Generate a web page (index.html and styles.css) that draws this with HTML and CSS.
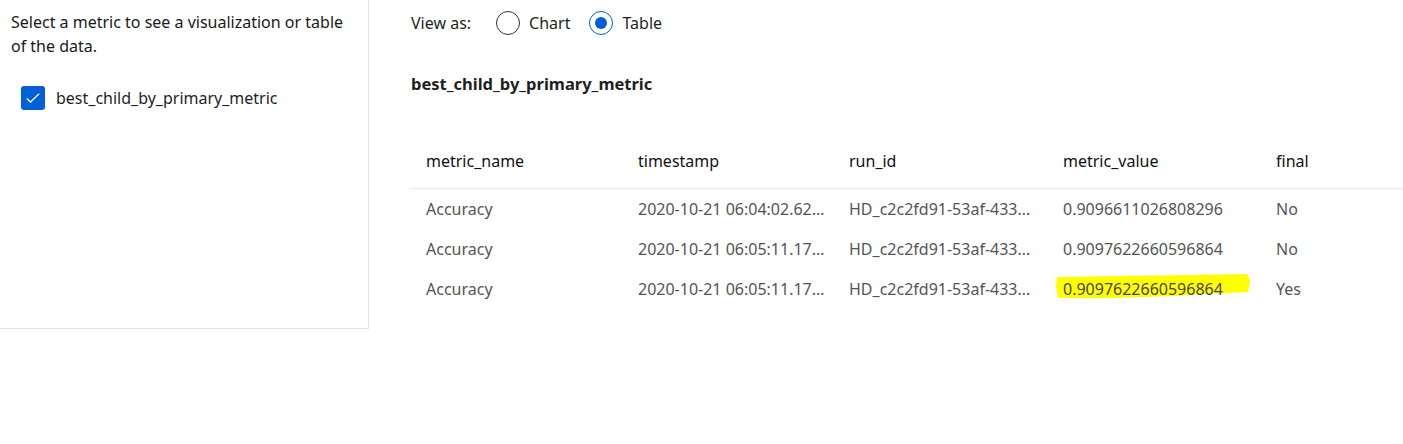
FILE: index.html
```html
<!DOCTYPE html>
<html lang="en">
<head>
<meta charset="utf-8">
<title>Metrics</title>
<link rel="stylesheet" href="styles.css">
</head>
<body>
<div class="page">
  <aside class="side">
    <p class="hint">Select a metric to see a visualization or table of the data.</p>
    <label class="check">
      <span class="box"><svg width="16" height="16" viewBox="0 0 16 16"><path d="M1.8 8.6 L5.6 12 L14.2 3.6" fill="none" stroke="#fff" stroke-width="1.3"/></svg></span>
      <span>best_child_by_primary_metric</span>
    </label>
  </aside>
  <main class="main">
    <div class="viewas">
      <span class="viewlabel">View as:</span>
      <span class="radio"><span class="ring"></span>Chart</span>
      <span class="radio on"><span class="ring"><span class="dot"></span></span>Table</span>
    </div>
    <h2 class="title">best_child_by_primary_metric</h2>
    <div class="table">
      <div class="row head">
        <div class="cell c1">metric_name</div>
        <div class="cell c2">timestamp</div>
        <div class="cell c3">run_id</div>
        <div class="cell c4">metric_value</div>
        <div class="cell c5">final</div>
      </div>
      <div class="row">
        <div class="cell c1">Accuracy</div>
        <div class="cell c2">2020-10-21 06:04:02.623456</div>
        <div class="cell c3">HD_c2c2fd91-53af-4335-9d6a</div>
        <div class="cell c4">0.9096611026808296</div>
        <div class="cell c5">No</div>
      </div>
      <div class="row">
        <div class="cell c1">Accuracy</div>
        <div class="cell c2">2020-10-21 06:05:11.173456</div>
        <div class="cell c3">HD_c2c2fd91-53af-4335-9d6a</div>
        <div class="cell c4">0.9097622660596864</div>
        <div class="cell c5">No</div>
      </div>
      <div class="row">
        <div class="cell c1">Accuracy</div>
        <div class="cell c2">2020-10-21 06:05:11.173456</div>
        <div class="cell c3">HD_c2c2fd91-53af-4335-9d6a</div>
        <div class="cell c4 hl"><svg class="marker" width="200" height="30" viewBox="0 0 200 30"><path d="M2 6 L60 5 L140 4 L192 3 L195 10 L193 21 L150 23 L120 25 L60 27 L3 27 L1 16 Z" fill="#ffff00"/></svg><span class="hltext">0.9097622660596864</span></div>
        <div class="cell c5">Yes</div>
      </div>
    </div>
  </main>
</div>
</body>
</html>
```

FILE: styles.css
```css
* { box-sizing: border-box; }
html, body { margin: 0; padding: 0; background: #fff; }
body { font-family: "Segoe UI", "Noto Sans", "Open Sans", sans-serif; font-size: 16px; color: #1f1f1f; }
.page { display: flex; align-items: flex-start; }
.side {
  width: 369px; height: 329px; flex: none;
  border-right: 1px solid #e4e4e4; border-bottom: 1px solid #e4e4e4;
  padding: 10px 11px;
}
.hint { margin: 0; line-height: 24px; font-size: 16px; color: #1a1a1a; }
.check { display: flex; align-items: center; gap: 11px; margin-top: 28px; padding-left: 10px; font-size: 16px; }
.box { width: 24px; height: 24px; border-radius: 3px; background: #0160d7; display: flex; align-items: center; justify-content: center; }
.main { flex: 1; padding: 10px 0 0 42px; }
.viewas { display: flex; align-items: center; height: 26px; font-size: 16px; }
.viewlabel { margin-right: 25px; }
.radio { display: flex; align-items: center; gap: 9px; margin-right: 19px; }
.ring { width: 24px; height: 24px; border-radius: 50%; border: 1px solid #333; display: flex; align-items: center; justify-content: center; }
.radio.on .ring { border-color: #0160d7; }
.dot { width: 12px; height: 12px; border-radius: 50%; background: #0160d7; }
.title { margin: 34px 0 0; font-size: 16.5px; font-weight: 700; line-height: 28px; }
.table { margin-top: 44px; margin-left: -1px; }
.row { display: flex; height: 40px; align-items: center; }
.row.head { height: 47px; border-bottom: 1px solid #e8e8e8; align-items: flex-start; padding-top: 7px; }
.cell { padding: 0 8px 0 16px; white-space: nowrap; overflow: hidden; text-overflow: ellipsis; flex: none; color: #555; font-size: 16px; line-height: 24px; }
.c1 { width: 212px; }
.c2 { width: 211px; }
.c3 { width: 214px; }
.c4 { width: 213px; }
.c5 { width: 120px; }
.head .cell { color: #111; }
.hl { position: relative; overflow: visible; }
.marker { position: absolute; left: 8px; top: -6px; z-index: 0; }
.hltext { position: relative; z-index: 1; color: #444; }
```
